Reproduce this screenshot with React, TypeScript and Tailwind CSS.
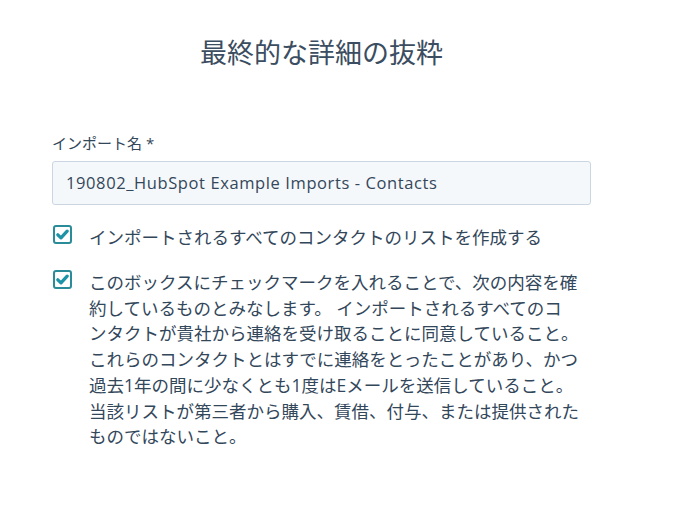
const font = "font-['Open_Sans','Noto_Sans_CJK_JP',sans-serif]";

function Check() {
  return (
    <span className="mt-px flex h-[19px] w-[19px] shrink-0 items-center justify-center rounded-[3px] border-2 border-[#2a8c99] bg-white">
      <svg viewBox="0 0 12 12" className="h-[13px] w-[13px]">
        <path d="M1.7 6.3 4.6 9.1 10.3 2.9" fill="none" stroke="#1c93a6" strokeWidth="3" strokeLinecap="round" strokeLinejoin="round" />
      </svg>
    </span>
  );
}

export default function App() {
  return (
    <div className={`min-h-[516px] w-[678px] bg-white text-[#33475b] ${font}`}>
      <div className="w-[591px] pl-[52px] pt-[37px]">
        <h1 className="text-center text-[27px] font-normal leading-[32px] text-[#3b4d60]">最終的な詳細の抜粋</h1>

        <label className="mt-[64px] block text-[15px] leading-[20px]">インポート名 *</label>
        <div className="mt-2 flex h-[44px] items-center rounded-[3px] border border-[#cbd6e2] bg-[#f5f8fa] px-[13px] text-[16.5px] tracking-[0.6px]">
          190802_HubSpot Example Imports - Contacts
        </div>

        <div className="mt-[19px] flex items-start gap-[17px] pl-px">
          <Check />
          <span className="text-[17.5px] leading-[26px]">インポートされるすべてのコンタクトのリストを作成する</span>
        </div>

        <div className="mt-5 flex items-start gap-[17px] pl-px">
          <span className="-mt-px">
            <Check />
          </span>
          <p className="text-[17.5px] leading-[25.7px]">
            このボックスにチェックマークを入れることで、次の内容を確
            <br />
            約しているものとみなします。 インポートされるすべてのコ
            <br />
            ンタクトが貴社から連絡を受け取ることに同意していること。
            <br />
            これらのコンタクトとはすでに連絡をとったことがあり、かつ
            <br />
            過去1年の間に少なくとも1度はEメールを送信していること。
            <br />
            当該リストが第三者から購入、賃借、付与、または提供された
            <br />
            ものではないこと。
          </p>
        </div>
      </div>
    </div>
  );
}
